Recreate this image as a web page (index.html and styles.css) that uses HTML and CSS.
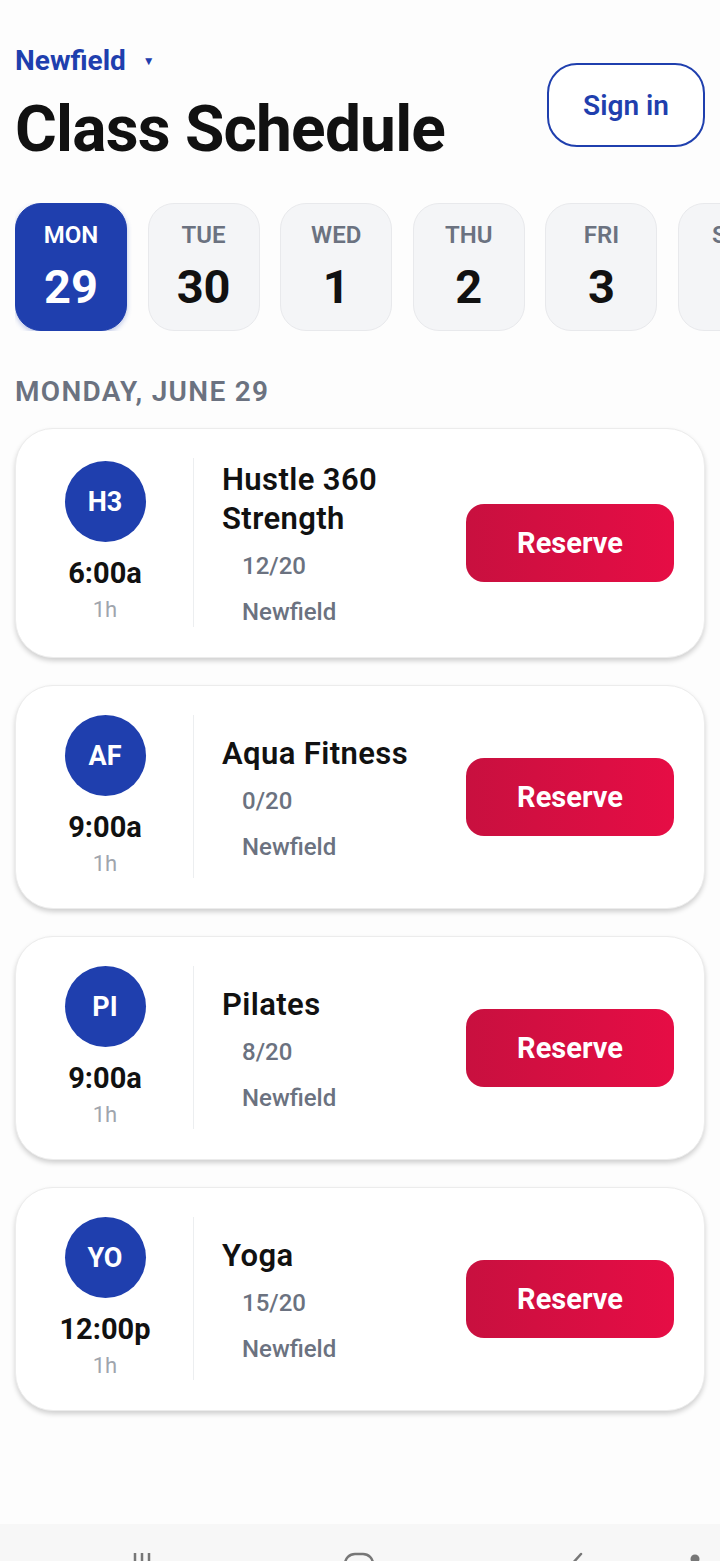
FILE: index.html
```html
<!DOCTYPE html>
<html lang="en">

<head>
    <meta charset="UTF-8">
    <meta name="viewport" content="width=device-width, initial-scale=1.0">
    <title>Class Schedule</title>
    <link rel="stylesheet" href="styles.css">
</head>

<body>
    <div class="page">
        <header class="top">
            <div class="titles">
                <div class="location">Newfield <span class="caret">&#9660;</span></div>
                <h1>Class Schedule</h1>
            </div>
            <button class="signin">Sign in</button>
        </header>

        <div class="days">
            <div class="day active"><span class="dname">MON</span><span class="dnum">29</span></div>
            <div class="day"><span class="dname">TUE</span><span class="dnum">30</span></div>
            <div class="day"><span class="dname">WED</span><span class="dnum">1</span></div>
            <div class="day"><span class="dname">THU</span><span class="dnum">2</span></div>
            <div class="day"><span class="dname">FRI</span><span class="dnum">3</span></div>
            <div class="day"><span class="dname">SAT</span><span class="dnum">4</span></div>
        </div>

        <h2 class="dayTitle">MONDAY, JUNE 29</h2>

        <div class="list">
            <div class="card">
                <div class="when">
                    <div class="avatar">H3</div>
                    <div class="time">6:00a</div>
                    <div class="dur">1h</div>
                </div>
                <div class="info">
                    <div class="name">Hustle 360<br>Strength</div>
                    <div class="meta">12/20</div>
                    <div class="meta">Newfield</div>
                </div>
                <button class="reserve">Reserve</button>
            </div>

            <div class="card">
                <div class="when">
                    <div class="avatar">AF</div>
                    <div class="time">9:00a</div>
                    <div class="dur">1h</div>
                </div>
                <div class="info">
                    <div class="name">Aqua Fitness</div>
                    <div class="meta">0/20</div>
                    <div class="meta">Newfield</div>
                </div>
                <button class="reserve">Reserve</button>
            </div>

            <div class="card">
                <div class="when">
                    <div class="avatar">PI</div>
                    <div class="time">9:00a</div>
                    <div class="dur">1h</div>
                </div>
                <div class="info">
                    <div class="name">Pilates</div>
                    <div class="meta">8/20</div>
                    <div class="meta">Newfield</div>
                </div>
                <button class="reserve">Reserve</button>
            </div>

            <div class="card">
                <div class="when">
                    <div class="avatar">YO</div>
                    <div class="time">12:00p</div>
                    <div class="dur">1h</div>
                </div>
                <div class="info">
                    <div class="name">Yoga</div>
                    <div class="meta">15/20</div>
                    <div class="meta">Newfield</div>
                </div>
                <button class="reserve">Reserve</button>
            </div>
        </div>
    </div>

    <!-- system nav bar, cut off by the screen edge -->
    <div class="navbar">
        <svg class="nav-ico" width="40" height="37" viewBox="0 0 40 37">
            <path d="M13 29v20M20 29v20M27 29v20" stroke="#777" stroke-width="2.5" fill="none" />
        </svg>
        <svg class="nav-ico" width="40" height="37" viewBox="0 0 40 37">
            <rect x="6" y="30" width="28" height="26" rx="10" stroke="#777" stroke-width="2.5" fill="none" />
        </svg>
        <svg class="nav-ico" width="40" height="37" viewBox="0 0 40 37">
            <path d="M25 30l-9 10" stroke="#777" stroke-width="2.5" fill="none" stroke-linecap="round" />
        </svg>
        <svg class="nav-ico nav-extra" width="40" height="37" viewBox="0 0 40 37">
            <circle cx="20" cy="35" r="4.5" fill="#777" />
        </svg>
    </div>
</body>

</html>
```

FILE: styles.css
```css
* {
    margin: 0;
    padding: 0;
    box-sizing: border-box;
}

html,
body {
    height: 100%;
}

body {
    font-family: Roboto, "Noto Sans", sans-serif;
    background: #fdfdfd;
    color: #111;
    overflow: hidden;
    display: flex;
    flex-direction: column;
}

.page {
    flex: 1;
    padding: 45px 15px 0;
}

/* header */
.top {
    display: flex;
    justify-content: space-between;
    align-items: flex-start;
}

.location {
    color: #1f3fae;
    font-size: 28px;
    font-weight: 700;
    line-height: 32px;
}

.caret {
    font-size: 12px;
    margin-left: 10px;
    vertical-align: 5px;
}

h1 {
    margin-top: 17px;
    font-size: 64px;
    font-weight: 700;
    line-height: 72px;
    letter-spacing: -0.8px;
}

.signin {
    margin-top: 18px;
    width: 158px;
    height: 84px;
    border: 2.5px solid #1f3fae;
    border-radius: 30px;
    background: #fff;
    color: #1f3fae;
    font-family: inherit;
    font-size: 28px;
    font-weight: 600;
}

/* day chips */
.days {
    display: flex;
    gap: 20.6px;
    margin-top: 37px;
    margin-right: -15px;
    overflow: hidden;
}

.day {
    flex: none;
    width: 112px;
    height: 128px;
    border-radius: 26px;
    background: #f4f5f7;
    border: 1.5px solid #e8e9ec;
    display: flex;
    flex-direction: column;
    align-items: center;
    padding-top: 16px;
}

.day.active {
    background: #1f3fae;
    border-color: #1f3fae;
    box-shadow: 0 2px 5px rgba(31, 63, 174, 0.3);
}

.dname {
    font-size: 24px;
    font-weight: 600;
    color: #6b7280;
    line-height: 30px;
}

.dnum {
    font-size: 47px;
    font-weight: 700;
    line-height: 52px;
    margin-top: 11px;
}

.day.active .dname,
.day.active .dnum {
    color: #fff;
}

.dayTitle {
    margin-top: 45px;
    font-size: 28px;
    font-weight: 600;
    color: #6b7280;
    letter-spacing: 1.3px;
    line-height: 32px;
}

/* class cards */
.list {
    margin-top: 20px;
    display: flex;
    flex-direction: column;
    gap: 27px;
}

.card {
    display: flex;
    align-items: center;
    background: #fff;
    border: 1px solid #ececec;
    border-radius: 38px;
    padding: 29px 30px 30px;
    box-shadow: 0 3px 5px rgba(0, 0, 0, 0.18);
}

.when {
    width: 118px;
    display: flex;
    flex-direction: column;
    align-items: center;
}

.avatar {
    width: 81px;
    height: 81px;
    border-radius: 50%;
    background: #1f3fae;
    color: #fff;
    font-size: 27px;
    font-weight: 700;
    display: flex;
    align-items: center;
    justify-content: center;
}

.time {
    margin-top: 14px;
    font-size: 29px;
    font-weight: 700;
    line-height: 34px;
}

.dur {
    margin-top: 6px;
    font-size: 22px;
    color: #a0a5ad;
    line-height: 28px;
}

.info {
    flex: 1;
    align-self: stretch;
    border-left: 1.5px solid #eceef0;
    margin-left: 29px;
    padding-left: 28px;
    display: flex;
    flex-direction: column;
    justify-content: center;
}

.name {
    margin-top: 2px;
    font-size: 31px;
    font-weight: 600;
    line-height: 39px;
    letter-spacing: 0.4px;
}

.meta {
    padding-left: 20px;
    margin-top: 16px;
    font-size: 24px;
    font-weight: 500;
    color: #6b7280;
    line-height: 30px;
}

.name + .meta {
    margin-top: 13px;
}

.reserve {
    flex: none;
    width: 208px;
    height: 78px;
    border: none;
    border-radius: 18px;
    background: linear-gradient(90deg, #c8103f, #e60d45);
    color: #fff;
    font-family: inherit;
    font-size: 29px;
    font-weight: 700;
}

/* android nav bar */
.navbar {
    flex: none;
    height: 37px;
    background: #f7f7f7;
    display: flex;
    padding: 0 5px 0 122px;
}

.nav-ico {
    flex: none;
    display: block;
}

.nav-ico + .nav-ico {
    margin-left: 177px;
}

.nav-ico.nav-extra {
    margin-left: auto;
}
```
